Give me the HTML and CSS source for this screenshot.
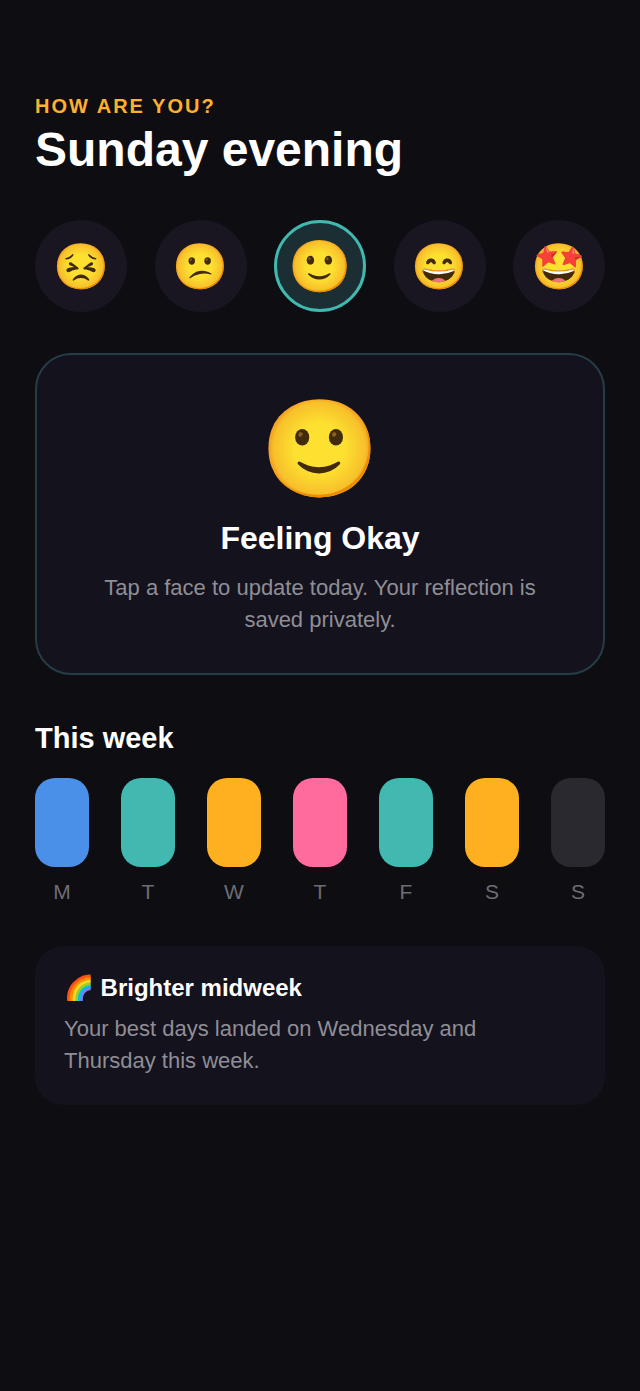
FILE: index.html
```html
<!DOCTYPE html>
<html lang="en">
<head>
<meta charset="UTF-8" />
<meta name="viewport" content="width=device-width, initial-scale=1.0"/>
<title>Mood Check-in</title>
<link rel="stylesheet" href="styles.css">
</head>

<body>
<main class="screen">
  <header class="header">
    <p class="eyebrow">HOW ARE YOU?</p>
    <h1>Sunday evening</h1>
  </header>

  <div class="moods">
    <button type="button" class="mood" aria-label="Awful">😣</button>
    <button type="button" class="mood" aria-label="Low">😕</button>
    <button type="button" class="mood selected" aria-label="Okay" aria-pressed="true">🙂</button>
    <button type="button" class="mood" aria-label="Good">😄</button>
    <button type="button" class="mood" aria-label="Great">🤩</button>
  </div>

  <section class="today">
    <div class="today-face">🙂</div>
    <h2>Feeling Okay</h2>
    <p>Tap a face to update today. Your reflection is saved privately.</p>
  </section>

  <section class="week">
    <h2>This week</h2>
    <ul class="days">
      <li class="day"><span class="bar blue"></span>M</li>
      <li class="day"><span class="bar teal"></span>T</li>
      <li class="day"><span class="bar amber"></span>W</li>
      <li class="day"><span class="bar pink"></span>T</li>
      <li class="day"><span class="bar teal"></span>F</li>
      <li class="day"><span class="bar amber"></span>S</li>
      <li class="day"><span class="bar empty"></span>S</li>
    </ul>
  </section>

  <section class="insight">
    <h3>🌈 Brighter midweek</h3>
    <p>Your best days landed on Wednesday and Thursday this week.</p>
  </section>
</main>
</body>
</html>
```
FILE: styles.css
```css
* {
  box-sizing: border-box;
}

body {
  font-family: "Liberation Sans", Arial, "Noto Color Emoji", sans-serif;
  background-color: #0d0d12;
  color: #ffffff;
  margin: 0;
}

h1, h2, h3, p, ul {
  margin: 0;
  padding: 0;
}

.screen {
  min-height: 100vh;
  padding: 95px 35px 40px;
}

.eyebrow {
  color: #ffb02e;
  font-size: 20px;
  line-height: 22px;
  font-weight: bold;
  letter-spacing: 2px;
}

h1 {
  margin-top: 5px;
  font-size: 48px;
  line-height: 56px;
}

.moods {
  display: flex;
  justify-content: space-between;
  margin-top: 42px;
}

.mood {
  width: 92px;
  height: 92px;
  padding: 0;
  border: 0;
  border-radius: 50%;
  background-color: #191622;
  font-family: inherit;
  font-size: 45px;
  line-height: 1;
  cursor: pointer;
}

.mood.selected {
  border: 3px solid #41b8b0;
  background-color: #1b2e34;
  font-size: 51px;
}

.today {
  margin-top: 41px;
  padding: 42px 56px 37px;
  border: 2px solid #263c46;
  border-radius: 36px;
  background-color: #14121d;
  text-align: center;
}

.today-face {
  font-size: 96px;
  line-height: 104px;
}

.today h2 {
  margin-top: 19px;
  font-size: 32px;
  line-height: 36px;
}

.today p {
  margin-top: 16px;
}

.today p,
.insight p {
  color: #8f8e96;
  font-size: 22px;
  line-height: 32px;
}

.week {
  margin-top: 46px;
}

.week h2 {
  font-size: 29px;
  line-height: 34px;
}

.days {
  display: flex;
  justify-content: space-between;
  margin-top: 23px;
  list-style: none;
}

.day {
  width: 54px;
  color: #6e6d73;
  font-size: 21px;
  line-height: 24px;
  text-align: center;
}

.bar {
  display: block;
  height: 89px;
  margin-bottom: 13px;
  border-radius: 20px;
}

.blue { background-color: #4a90e8; }
.teal { background-color: #41b8b0; }
.amber { background-color: #ffb020; }
.pink { background-color: #ff6b9d; }
.empty { background-color: #2a2930; }

.insight {
  margin-top: 42px;
  padding: 28px 36px 28px 29px;
  border-radius: 28px;
  background-color: #14121d;
}

.insight h3 {
  font-size: 24px;
  line-height: 28px;
}

.insight p {
  margin-top: 11px;
}
```
